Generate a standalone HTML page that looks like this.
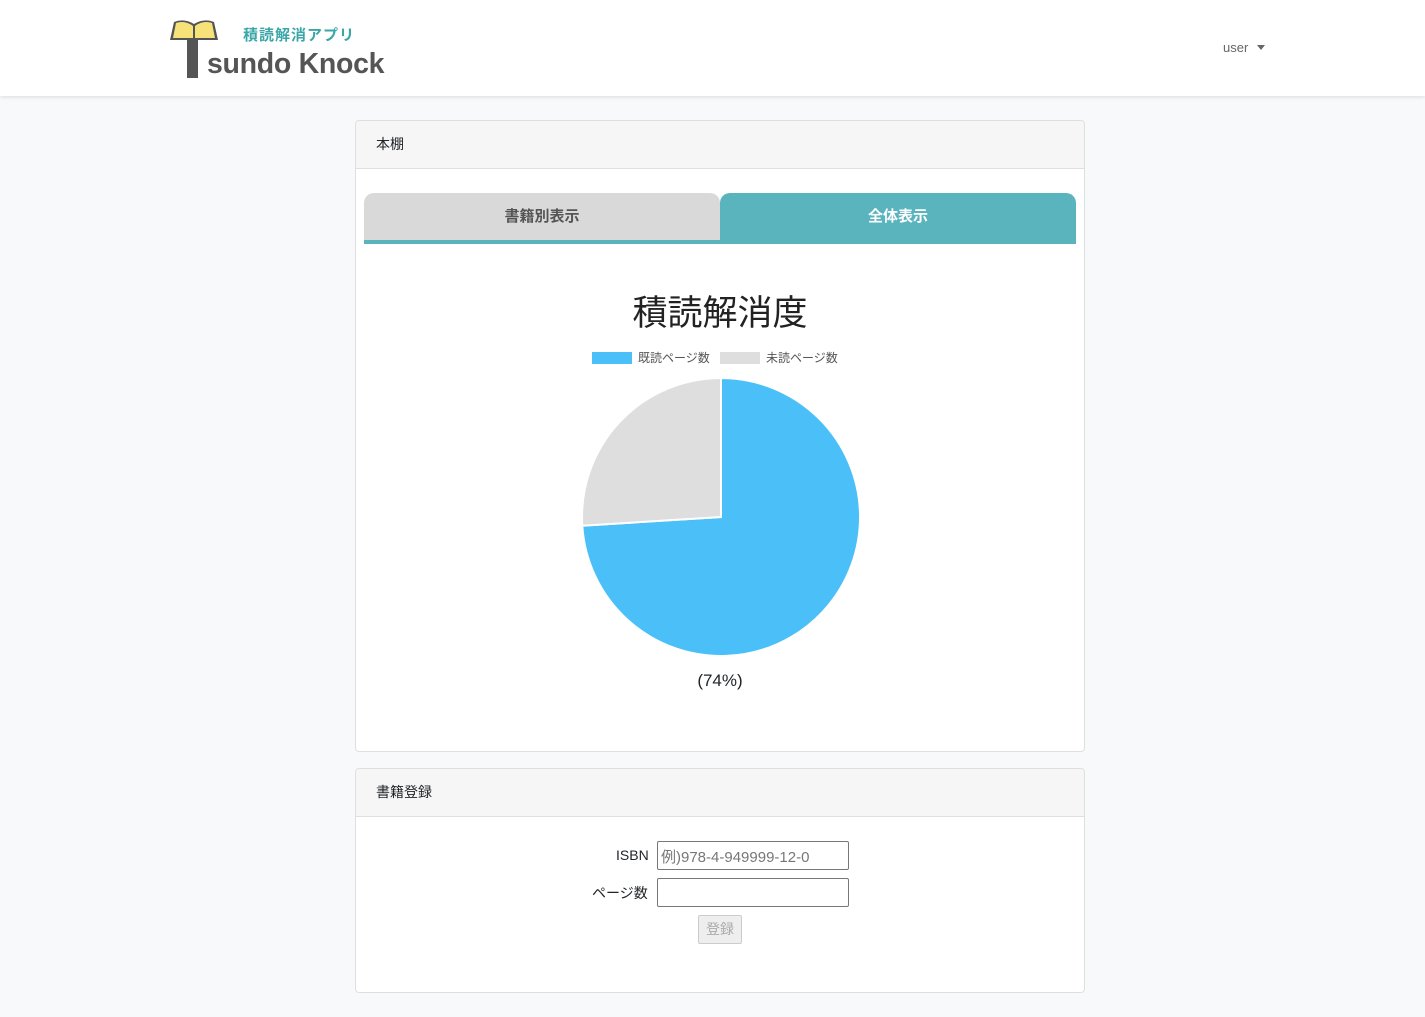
<!DOCTYPE html>
<html><head><meta charset="utf-8"><style>
*{box-sizing:border-box;margin:0;padding:0}
body{width:1425px;height:1017px;background:#f8f9fa;font-family:"Liberation Sans","Noto Sans CJK JP",sans-serif;color:#212529;position:relative;overflow:hidden}
.nav{position:absolute;left:0;top:0;width:1425px;height:96px;background:#fff;box-shadow:0 1px 4px rgba(0,0,0,.12)}
.card{position:absolute;left:355px;width:730px;background:#fff;border:1px solid #dfdfdf;border-radius:4px;overflow:hidden}
.ch{height:48px;background:#f6f6f6;border-bottom:1px solid #dfdfdf;padding:0 20px;line-height:47px;font-size:14px}
.tab{position:absolute;top:72px;height:48px;border-radius:10px 10px 0 0;text-align:center;line-height:48px;font-size:15px;font-weight:bold}
</style></head><body>
<div class="nav">
<svg style="position:absolute;left:168px;top:18px" width="52" height="62" viewBox="0 0 52 62">
<rect x="19" y="20" width="11" height="40" fill="#555"/>
<path d="M2 22 L26 22 L50 22 L46 4 Q36 0 26 6 Q16 0 6 4 Z" fill="#555"/>
<path d="M5 20 L8 5 Q17 2 25 8 L25 20 Z M27 20 L27 8 Q35 2 44 5 L47 20 Z" fill="#f7e27a"/>
</svg>
<div style="position:absolute;left:243px;top:24px;font-size:15px;font-weight:bold;color:#3aa6a8;letter-spacing:1px">積読解消アプリ</div>
<div style="position:absolute;left:207px;top:48px;font-size:28.5px;font-weight:bold;color:#555;letter-spacing:-0.3px">sundo Knock</div>
<div style="position:absolute;left:1223px;top:40px;font-size:13px;color:#666">user <span style="display:inline-block;margin-left:5px;border-left:4px solid transparent;border-right:4px solid transparent;border-top:5px solid #666;vertical-align:2px"></span></div>
</div>

<div class="card" style="top:120px;height:632px">
<div class="ch">本棚</div>
<div class="tab" style="left:8px;width:356px;background:#d9d9d9;color:#555">書籍別表示</div>
<div class="tab" style="left:364px;width:356px;background:#5ab4bd;color:#fff">全体表示</div>
<div style="position:absolute;left:8px;top:119px;width:712px;height:4px;background:#5ab4bd"></div>
<div style="position:absolute;left:0;width:728px;top:164px;text-align:center;font-size:35px;color:#222">積読解消度</div>
<div style="position:absolute;left:236px;top:231px;width:40px;height:12px;background:#4bc0f8"></div>
<div style="position:absolute;left:282px;top:228px;font-size:12px;color:#555">既読ページ数</div>
<div style="position:absolute;left:364px;top:231px;width:40px;height:12px;background:#dedede"></div>
<div style="position:absolute;left:410px;top:228px;font-size:12px;color:#555">未読ページ数</div>
<svg style="position:absolute;left:0;top:0" width="728" height="630">
<g transform="translate(-355,-120)">
<path d="M720 516 L720 377 A139 139 0 1 1 581.3 524.7 Z" fill="#4bc0f8" stroke="#fff" stroke-width="2"/>
<path d="M720 516 L581.3 524.7 A139 139 0 0 1 720 377 Z" fill="#dedede" stroke="#fff" stroke-width="2"/>
</g></svg>
<div style="position:absolute;left:0;width:728px;top:550px;text-align:center;font-size:17px">(74%)</div>
</div>

<div class="card" style="top:768px;height:225px">
<div class="ch">書籍登録</div>
<div style="position:absolute;left:260px;top:78px;font-size:14px">ISBN</div>
<div style="position:absolute;left:301px;top:72px;width:192px;height:29px;border:1px solid #777;border-radius:2px;font-size:15px;color:#777;padding:4px 3px">例)978-4-949999-12-0</div>
<div style="position:absolute;left:236px;top:114px;font-size:14px">ページ数</div>
<div style="position:absolute;left:301px;top:109px;width:192px;height:29px;border:1px solid #777;border-radius:2px"></div>
<div style="position:absolute;left:342px;top:146px;width:44px;height:29px;border:1px solid #ccc;border-radius:2px;background:#eee;color:#aaa;font-size:14px;text-align:center;line-height:27px">登録</div>
</div>
</body></html>
